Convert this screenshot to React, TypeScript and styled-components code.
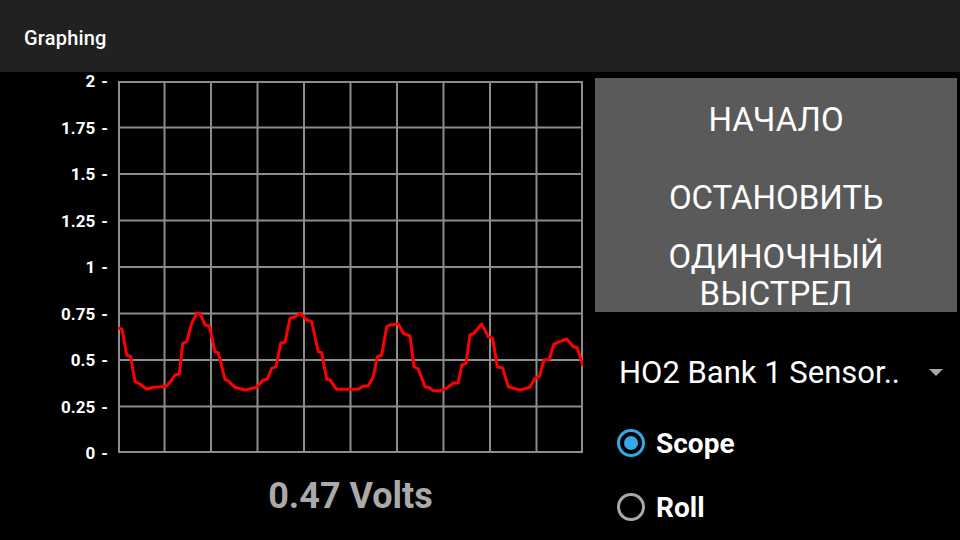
import React from "react";
import styled, { createGlobalStyle } from "styled-components";

const GlobalStyle = createGlobalStyle`
  html, body {
    margin: 0;
    padding: 0;
    background: #000;
    font-family: Roboto, "Liberation Sans", sans-serif;
    color: #fff;
  }
`;

const Screen = styled.div`
  width: 960px;
  height: 540px;
  background: #000;
  display: flex;
  flex-direction: column;
  overflow: hidden;
`;

const Header = styled.header`
  height: 72px;
  flex: none;
  background: #212121;
  display: flex;
  align-items: center;
  padding: 3px 0 0 24px;
  box-sizing: border-box;
`;

const Title = styled.h1`
  margin: 0;
  font-size: 20px;
  font-weight: 500;
  color: #fff;
  letter-spacing: 0.2px;
`;

const Main = styled.main`
  flex: 1;
  display: flex;
`;

const LeftColumn = styled.section`
  width: 595px;
  display: flex;
  flex-direction: column;
`;

const ChartRow = styled.div`
  display: flex;
  margin-top: 9px;
  height: 372px;
`;

const Axis = styled.div`
  width: 108px;
  height: 372px;
  display: flex;
  flex-direction: column;
  justify-content: space-between;
  align-items: flex-end;
  margin-right: 10px;
`;

const Tick = styled.div`
  height: 0;
  display: flex;
  align-items: center;
  font-size: 17px;
  font-weight: 700;
  color: #fff;
  white-space: nowrap;
`;

const TickMark = styled.span`
  margin-left: 6px;
`;

const ChartSvg = styled.svg`
  width: 465px;
  height: 372px;
  display: block;
`;

const Reading = styled.div`
  width: 465px;
  margin-left: 118px;
  margin-top: 22px;
  text-align: center;
  font-size: 36px;
  font-weight: 700;
  color: #aaaaaa;
  line-height: 42px;
`;

const RightColumn = styled.section`
  flex: 1;
  display: flex;
  flex-direction: column;
  padding-top: 6px;
`;

const ButtonPanel = styled.div`
  width: 362px;
  height: 234px;
  background: #5a5a5a;
  display: flex;
  flex-direction: column;
`;

const ActionButton = styled.button`
  flex: 1;
  border: none;
  background: transparent;
  color: #fff;
  font-family: Roboto, "Liberation Sans", sans-serif;
  font-size: 33px;
  font-weight: 400;
  line-height: 37px;
  padding: 4px 10px 0;
  text-transform: uppercase;
  cursor: pointer;
  display: flex;
  align-items: center;
  justify-content: center;
  text-align: center;
`;

const Dropdown = styled.div`
  height: 118px;
  display: flex;
  align-items: center;
  justify-content: space-between;
  padding: 0 17px 0 24px;
  box-sizing: border-box;
  margin-top: 1px;
`;

const DropdownText = styled.span`
  font-size: 31px;
  font-weight: 400;
  color: #fff;
`;

const Arrow = styled.span`
  width: 0;
  height: 0;
  border-left: 7px solid transparent;
  border-right: 7px solid transparent;
  border-top: 7px solid #a9a9a9;
`;

const RadioGroup = styled.div`
  display: flex;
  flex-direction: column;
  gap: 22px;
  padding-left: 22px;
  margin-top: -9px;
`;

const RadioRow = styled.label`
  display: flex;
  align-items: center;
  gap: 11px;
  height: 42px;
`;

const RadioCircle = styled.span<{ $checked: boolean }>`
  width: 28px;
  height: 28px;
  box-sizing: border-box;
  border-radius: 50%;
  border: 3px solid ${(p) => (p.$checked ? "#33a8e6" : "#a9a9a9")};
  display: flex;
  align-items: center;
  justify-content: center;
  &::after {
    content: "";
    width: 14px;
    height: 14px;
    border-radius: 50%;
    background: ${(p) => (p.$checked ? "#33a8e6" : "transparent")};
  }
`;

const RadioLabel = styled.span`
  font-size: 28px;
  font-weight: 700;
  color: #fff;
`;

const ticks = ["2", "1.75", "1.5", "1.25", "1", "0.75", "0.5", "0.25", "0"];

const wave: [number, number][] = [
  [118, 328.3], [122, 329], [126.7, 355], [130.7, 356.7], [135, 381.7], [140, 384],
  [146.7, 389.3], [153.3, 387.3], [161.7, 386.7], [166.7, 386], [171.7, 380], [175, 375],
  [179.3, 374], [182.7, 343.3], [186.7, 341.7], [191.7, 323.3], [196.7, 313.3], [200, 313.3],
  [205, 325], [209.3, 326], [215, 351.7], [218.3, 352.7], [225, 379.3], [228.3, 381],
  [235, 387.3], [245, 390], [256.7, 387.3], [263.3, 380], [267.3, 379.3], [271.7, 368.3],
  [276, 366.7], [280.7, 343.3], [285, 342.3], [290, 318.3], [295, 316.7], [300.7, 313.3],
  [306.7, 320], [311.7, 321.7], [318.3, 351.7], [321.7, 352.7], [326.7, 379], [330, 380],
  [336.7, 389.3], [358.3, 389.3], [363.3, 386], [368.3, 385.7], [373.3, 376.7],
  [377.3, 356.7], [381.7, 355], [386.7, 326.7], [390, 325], [398.3, 324], [403.3, 333.3],
  [410, 336], [414, 366.7], [418.3, 369], [425, 386.7], [428.3, 387.3], [433.3, 390.7],
  [440, 390.7], [446.7, 388.3], [453.3, 383.3], [458.3, 382.7], [461.7, 365], [466, 363.3],
  [470, 335], [474, 333.3], [481.7, 324], [488.3, 336.7], [492.7, 338.3], [497.3, 366.7],
  [502.7, 368.3], [508.3, 386.7], [520, 390], [530, 387.3], [535, 378.3], [539.3, 376.7],
  [544, 360], [549.3, 359.3], [554, 344], [560, 341.7], [566.7, 339], [573.3, 346.7],
  [577.3, 347.7], [582.7, 365],
];

const W = 465;
const H = 372;

function Chart() {
  const cols = 10;
  const rows = 8;
  const pts = wave.map(([x, y]) => `${(x - 118).toFixed(1)},${(y - 81).toFixed(1)}`).join(" ");
  return (
    <ChartSvg viewBox={`0 0 ${W} ${H}`}>
      <g stroke="#8c8c8c" strokeWidth={2} fill="none">
        {Array.from({ length: cols + 1 }, (_, i) => {
          const x = Math.min(Math.max((i * W) / cols, 1), W - 1);
          return <line key={`v${i}`} x1={x} y1={0} x2={x} y2={H} />;
        })}
        {Array.from({ length: rows + 1 }, (_, i) => {
          const y = Math.min(Math.max((i * H) / rows, 1), H - 1);
          return <line key={`h${i}`} x1={0} y1={y} x2={W} y2={y} />;
        })}
      </g>
      <polyline points={pts} fill="none" stroke="#ff0000" strokeWidth={3} strokeLinejoin="round" strokeLinecap="round" />
    </ChartSvg>
  );
}

export default function App() {
  return (
    <Screen>
      <GlobalStyle />
      <Header>
        <Title>Graphing</Title>
      </Header>
      <Main>
        <LeftColumn>
          <ChartRow>
            <Axis>
              {ticks.map((t) => (
                <Tick key={t}>
                  {t}
                  <TickMark>-</TickMark>
                </Tick>
              ))}
            </Axis>
            <Chart />
          </ChartRow>
          <Reading>0.47 Volts</Reading>
        </LeftColumn>
        <RightColumn>
          <ButtonPanel>
            <ActionButton>НАЧАЛО</ActionButton>
            <ActionButton>ОСТАНОВИТЬ</ActionButton>
            <ActionButton>ОДИНОЧНЫЙ<br />ВЫСТРЕЛ</ActionButton>
          </ButtonPanel>
          <Dropdown>
            <DropdownText>HO2 Bank 1 Sensor..</DropdownText>
            <Arrow />
          </Dropdown>
          <RadioGroup>
            <RadioRow>
              <RadioCircle $checked />
              <RadioLabel>Scope</RadioLabel>
            </RadioRow>
            <RadioRow>
              <RadioCircle $checked={false} />
              <RadioLabel>Roll</RadioLabel>
            </RadioRow>
          </RadioGroup>
        </RightColumn>
      </Main>
    </Screen>
  );
}
